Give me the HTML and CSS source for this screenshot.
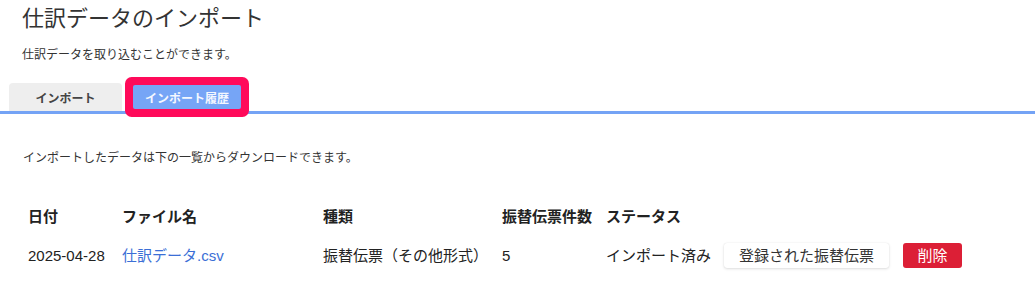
FILE: index.html
```html
<!DOCTYPE html>
<html lang="ja">
<head>
<meta charset="utf-8">
<title>仕訳データのインポート</title>
<link rel="stylesheet" href="styles.css">
</head>
<body>
<div class="page-head">
  <h1 class="title">仕訳データのインポート</h1>
  <p class="lead">仕訳データを取り込むことができます。</p>
</div>
<div class="tabs">
  <button class="tab">インポート</button>
  <button class="tab tab-active">インポート履歴</button>
</div>
<p class="note">インポートしたデータは下の一覧からダウンロードできます。</p>
<table class="history">
  <colgroup>
    <col class="c1"><col class="c2"><col class="c3"><col class="c4"><col class="c5"><col class="c6">
  </colgroup>
  <thead>
    <tr><th>日付</th><th>ファイル名</th><th>種類</th><th>振替伝票件数</th><th>ステータス</th><th></th></tr>
  </thead>
  <tbody>
    <tr>
      <td>2025-04-28</td>
      <td><a class="file" href="#">仕訳データ.csv</a></td>
      <td>振替伝票（その他形式）</td>
      <td>5</td>
      <td>インポート済み</td>
      <td class="actions"><button class="btn btn-light">登録された振替伝票</button><button class="btn btn-danger">削除</button></td>
    </tr>
  </tbody>
</table>
</body>
</html>
```

FILE: styles.css
```css
* { box-sizing: border-box; }
body {
  margin: 0;
  font-family: "Liberation Sans", "Noto Sans CJK JP", sans-serif;
  color: #222;
  background: #fff;
}
.page-head { padding: 3px 22px 0; }
.title {
  margin: 0;
  font-size: 22px;
  line-height: 32px;
  font-weight: normal;
  color: #333;
}
.lead {
  margin: 11px 0 0;
  font-size: 12px;
  line-height: 18px;
  color: #333;
}
.tabs {
  margin-top: 19px;
  display: flex;
  align-items: flex-start;
  padding-left: 9px;
  border-bottom: 3px solid #74a3f5;
  height: 31px;
}
.tab {
  font-family: inherit;
  border: none;
  margin: 0;
  padding: 0;
  width: 113px;
  height: 28px;
  font-size: 12px;
  font-weight: bold;
  color: #444;
  background: #eeeeee;
  border-radius: 4px 4px 0 0;
}
.tab-active {
  position: relative;
  width: 108px;
  height: 24px;
  margin: 2px 0 0 11px;
  background: #76a5f6;
  color: #f4f7ff;
  border-radius: 2px;
  box-shadow: 0 0 0 8px #ff0a5a;
}
.note {
  margin: 35px 0 0;
  padding-left: 23px;
  font-size: 12px;
  line-height: 18px;
  color: #333;
}
.history {
  margin: 29px 0 0 18px;
  width: 944px;
  table-layout: fixed;
  border-collapse: collapse;
  font-size: 15px;
}
.c1 { width: 94px; }
.c2 { width: 201px; }
.c3 { width: 179px; }
.c4 { width: 104px; }
.c5 { width: 118px; }
.c6 { width: 248px; }
.history th, .history td {
  padding: 0 0 0 10px;
  height: 39px;
  text-align: left;
  line-height: 19px;
  white-space: nowrap;
  vertical-align: middle;
}
.history th { height: 40px; font-weight: bold; color: #222; }
.file { color: #3b6fd6; text-decoration: none; }
.btn {
  font-family: inherit;
  border: none;
  height: 25px;
  line-height: 25px;
  font-size: 15px;
  border-radius: 3px;
  vertical-align: middle;
  margin: 0;
}
.btn-light {
  padding: 0 15px;
  background: #fff;
  color: #333;
  box-shadow: 0 1px 3px rgba(0,0,0,0.13), 0 0 1px rgba(0,0,0,0.12);
}
.btn-danger {
  margin-left: 14px;
  padding: 0 14.5px;
  background: #dc1f36;
  color: #fff;
}
```
